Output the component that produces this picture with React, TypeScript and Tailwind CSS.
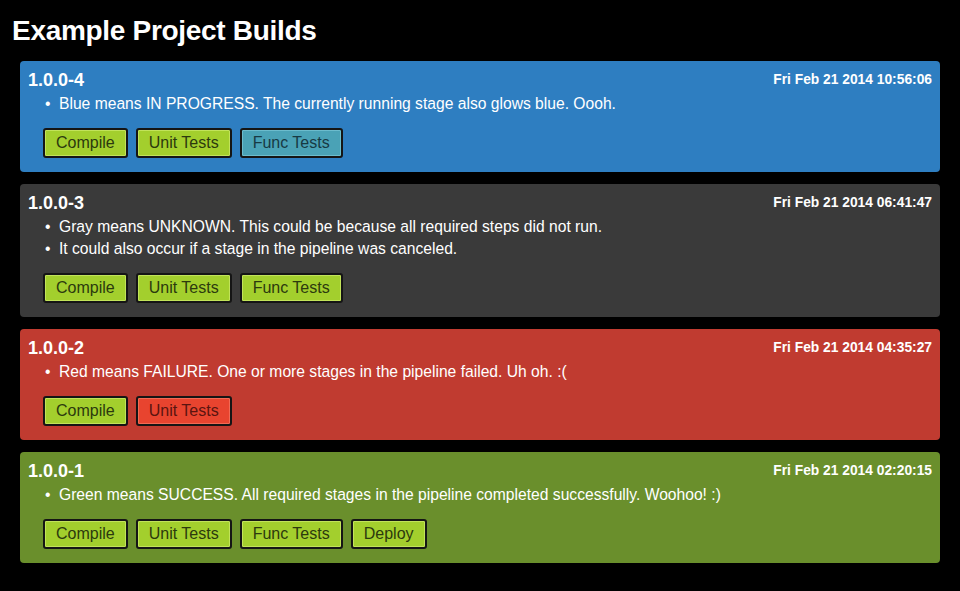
type Stage = { name: string; state: "ok" | "running" | "failed" };

type Build = {
  version: string;
  date: string;
  card: string;
  notes: string[];
  stages: Stage[];
};

const builds: Build[] = [
  {
    version: "1.0.0-4",
    date: "Fri Feb 21 2014 10:56:06",
    card: "bg-[#2e7ec1]",
    notes: ["Blue means IN PROGRESS. The currently running stage also glows blue. Oooh."],
    stages: [
      { name: "Compile", state: "ok" },
      { name: "Unit Tests", state: "ok" },
      { name: "Func Tests", state: "running" },
    ],
  },
  {
    version: "1.0.0-3",
    date: "Fri Feb 21 2014 06:41:47",
    card: "bg-[#3a3a3a]",
    notes: [
      "Gray means UNKNOWN. This could be because all required steps did not run.",
      "It could also occur if a stage in the pipeline was canceled.",
    ],
    stages: [
      { name: "Compile", state: "ok" },
      { name: "Unit Tests", state: "ok" },
      { name: "Func Tests", state: "ok" },
    ],
  },
  {
    version: "1.0.0-2",
    date: "Fri Feb 21 2014 04:35:27",
    card: "bg-[#c03b30]",
    notes: ["Red means FAILURE. One or more stages in the pipeline failed. Uh oh. :("],
    stages: [
      { name: "Compile", state: "ok" },
      { name: "Unit Tests", state: "failed" },
    ],
  },
  {
    version: "1.0.0-1",
    date: "Fri Feb 21 2014 02:20:15",
    card: "bg-[#6a8f2c]",
    notes: ["Green means SUCCESS. All required stages in the pipeline completed successfully. Woohoo! :)"],
    stages: [
      { name: "Compile", state: "ok" },
      { name: "Unit Tests", state: "ok" },
      { name: "Func Tests", state: "ok" },
      { name: "Deploy", state: "ok" },
    ],
  },
];

const stageStyle = {
  ok: "bg-[#a3cf2d] text-[#2c3a0e] shadow-[inset_0_0_0_1px_#c2e35a]",
  running: "bg-[#4aa2b6] text-[#173a44] shadow-[inset_0_0_0_1px_#6cbccd]",
  failed: "bg-[#e8442f] text-[#5a1410] shadow-[inset_0_0_0_1px_#f26a55]",
};

function StageButton({ stage }: { stage: Stage }) {
  return (
    <div
      className={`h-[30px] px-[11px] flex items-center rounded-[3px] border-2 border-[#151515] text-[16px] ${stageStyle[stage.state]}`}
    >
      {stage.name}
    </div>
  );
}

function BuildCard({ build }: { build: Build }) {
  return (
    <div className={`rounded-[4px] px-[8px] pt-[9px] pb-[14px] text-white ${build.card}`}>
      <div className="flex justify-between items-start">
        <div className="text-[18px] leading-[20px] font-bold">{build.version}</div>
        <div className="text-[13.8px] leading-[20px] font-bold">{build.date}</div>
      </div>
      <ul className="mt-[3px] pl-[16px]">
        {build.notes.map((n) => (
          <li key={n} className="text-[15.65px] leading-[22px] flex">
            <span className="w-[15px] shrink-0 pl-[1px]">•</span>
            <span>{n}</span>
          </li>
        ))}
      </ul>
      <div className="flex gap-[8px] mt-[13px] pl-[15px]">
        {build.stages.map((s) => (
          <StageButton key={s.name} stage={s} />
        ))}
      </div>
    </div>
  );
}

export default function App() {
  return (
    <div
      className="min-h-screen w-full bg-black pl-[12px] pr-[20px] pt-[14px] pb-[30px]"
      style={{ fontFamily: '"Liberation Sans", Arial, sans-serif' }}
    >
      <h1 className="text-white font-bold text-[28px] leading-[34px] tracking-[-0.3px]">Example Project Builds</h1>
      <div className="flex flex-col gap-[12px] mt-[13px] pl-[8px]">
        {builds.map((b) => (
          <BuildCard key={b.version} build={b} />
        ))}
      </div>
    </div>
  );
}
